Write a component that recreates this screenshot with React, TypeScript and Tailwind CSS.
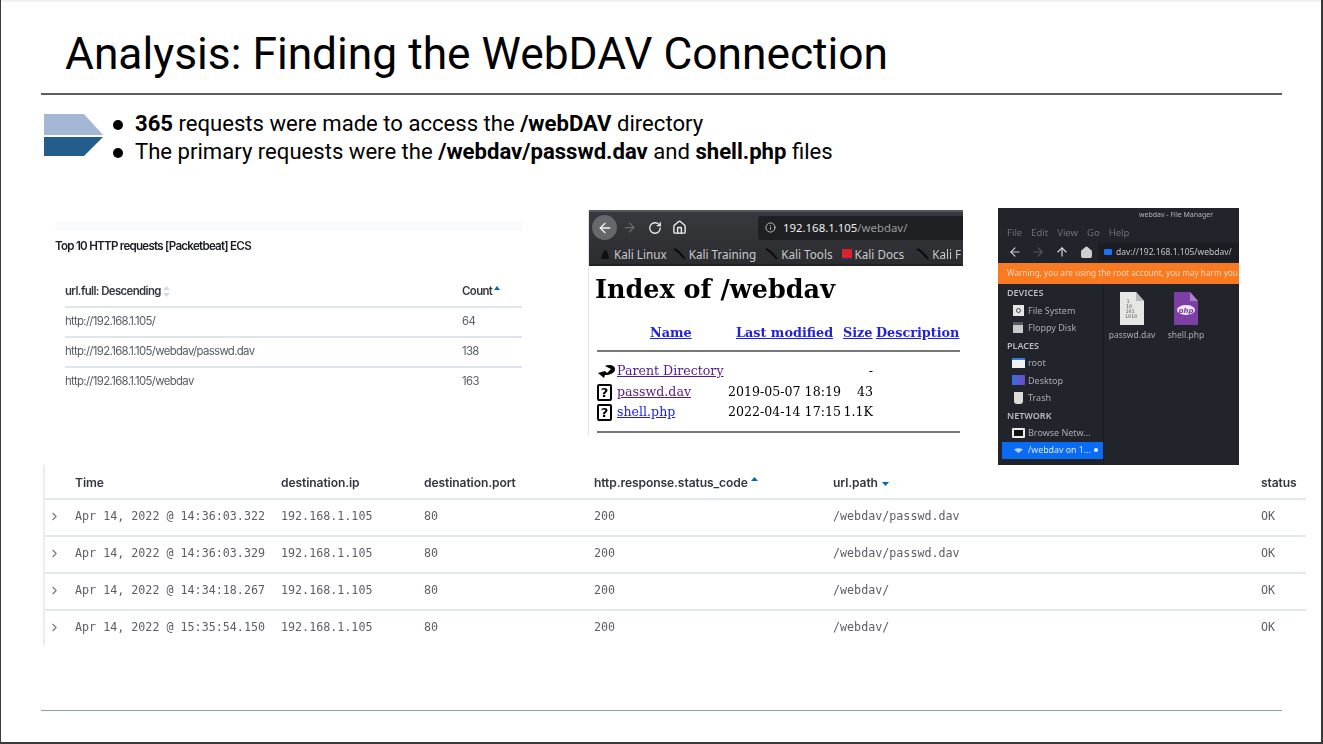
import React from 'react';
import { ArrowLeft, ArrowRight, RotateCw, Home, Info, ArrowUp, ChevronRight } from 'lucide-react';

const topUrls = [
  { url: 'http://192.168.1.105/', count: '64' },
  { url: 'http://192.168.1.105/webdav/passwd.dav', count: '138' },
  { url: 'http://192.168.1.105/webdav', count: '163' },
];

const rows = [
  { time: 'Apr 14, 2022 @ 14:36:03.322', path: '/webdav/passwd.dav' },
  { time: 'Apr 14, 2022 @ 14:36:03.329', path: '/webdav/passwd.dav' },
  { time: 'Apr 14, 2022 @ 14:34:18.267', path: '/webdav/' },
  { time: 'Apr 14, 2022 @ 15:35:54.150', path: '/webdav/' },
];

const gridCols = 'grid grid-cols-[30px_206px_143px_170px_239px_428px_45px] items-center';

function SlideArrow() {
  return (
    <svg width="60" height="44" viewBox="0 0 60 44" className="shrink-0">
      <polygon points="0,1 40,1 59,22 0,22" fill="#a4b8d6" />
      <polygon points="0,24 59,24 40,43 0,43" fill="#235d8e" />
    </svg>
  );
}

function Bookmark({ label, red, className }: { label: string; red?: boolean; className?: string }) {
  return (
    <span className={`flex items-center gap-[3px] ${className ?? ''}`}>
      {red ? (
        <span className="w-[10px] h-[11px] bg-[#d8232a] border-b-2 border-[#27306a]" />
      ) : (
        <svg width="13" height="12" viewBox="0 0 13 12">
          <path d="M1 1 C4 2 8 6 12 11" stroke="#0b0b0b" strokeWidth="2" fill="none" />
        </svg>
      )}
      <span>{label}</span>
    </span>
  );
}

function DocIcon() {
  return (
    <span className="w-[15px] h-[17px] border-2 border-black rounded-[2px] flex items-center justify-center font-['DejaVu_Sans'] font-bold text-[13px] text-black leading-none">
      ?
    </span>
  );
}

function Side({ label, icon }: { label: string; icon: React.ReactNode }) {
  return (
    <div className="h-[17.5px] pl-[13px] flex items-center gap-[3px]">
      <span className="w-[14px] h-[14px] flex items-center justify-center shrink-0">{icon}</span>
      <span>{label}</span>
    </div>
  );
}

function Heading({ label }: { label: string }) {
  return <div className="h-[17.5px] flex items-center pl-[9px] font-semibold text-[#b9bcc0]">{label}</div>;
}

export default function App() {
  return (
    <div className="w-[1323px] h-[744px] overflow-hidden bg-white border-l border-r-2 border-b-2 border-[#3a3a3a] flex flex-col font-['Roboto',sans-serif] text-black">
      <div className="h-[2px] bg-[#f1f1f1] shrink-0" />

      <h1 className="h-[91px] pl-[64px] pt-[22px] text-[44.3px] leading-[60px] font-normal shrink-0">
        Analysis: Finding the WebDAV Connection
      </h1>
      <div className="ml-[40px] w-[1241px] h-[1.5px] bg-[#5f5f5f] shrink-0" />

      {/* Bullets */}
      <div className="h-[113px] pl-[43px] pt-[18px] flex items-start gap-[9px] shrink-0">
        <SlideArrow />
        <ul className="text-[22.1px] leading-[28px] -mt-[4px]">
          <li className="flex items-center">
            <span className="w-[10px] h-[10px] mt-[4px] rounded-full bg-black mr-[12px]" />
            <span><b className="font-bold">365</b> requests were made to access the <b className="font-bold">/webDAV</b> directory</span>
          </li>
          <li className="flex items-center">
            <span className="w-[10px] h-[10px] mt-[4px] rounded-full bg-black mr-[12px]" />
            <span>The primary requests were the <b className="font-bold">/webdav/passwd.dav</b> and <b className="font-bold">shell.php</b> files</span>
          </li>
        </ul>
      </div>

      {/* Screenshots */}
      <div className="h-[257px] flex items-start shrink-0">
        {/* Kibana top requests */}
        <div className="ml-[54px] mt-[14px] w-[467px] font-['Inter',sans-serif] blur-[0.4px]">
          <div className="h-[9px] bg-[#fafbfc]" />
          <div className="h-[32px] flex items-center text-[11.6px] font-semibold text-[#1a1c21] tracking-[-0.75px]">
            Top 10 HTTP requests [Packetbeat] ECS
          </div>
          <div className="ml-[10px] h-[45px] pt-[15px] flex items-center justify-between border-b-2 border-[#dfe4ee] text-[11.4px] font-semibold text-[#343741] tracking-[-0.6px]">
            <span className="flex items-center gap-[2px]">
              url.full: Descending
              <svg width="7" height="11" viewBox="0 0 7 11"><path d="M3.5 0 7 4H0zM3.5 11 0 7h7z" fill="#d3dae6" /></svg>
            </span>
            <span className="w-[60px] flex items-start gap-[2px]">
              Count
              <svg width="6" height="4" viewBox="0 0 6 4" className="mt-[3px]"><path d="M3 0 6 4H0z" fill="#006bb4" /></svg>
            </span>
          </div>
          {topUrls.map((r) => (
            <div key={r.url} className="ml-[10px] h-[30px] flex items-center justify-between border-b-2 border-[#dfe4ee] last:border-b-transparent text-[11.4px] text-[#5a5c66] tracking-[-0.65px]">
              <span>{r.url}</span>
              <span className="w-[60px]">{r.count}</span>
            </div>
          ))}
        </div>

        {/* Firefox directory listing */}
        <div className="ml-[66px] mt-[2px] w-[375px] h-[225px] overflow-hidden border-l border-[#e4e4e4] blur-[0.3px]">
          <div className="h-[56px] bg-gradient-to-b from-[#38393e] to-[#2c2d31] border-t-2 border-[#55565a] border-b-2 border-b-[#222]">
            <div className="h-[32px] flex items-center">
              <span className="ml-[3px] w-[25px] h-[25px] rounded-full bg-[#67686c] flex items-center justify-center">
                <ArrowLeft size={16} color="#f2f2f2" strokeWidth={2} />
              </span>
              <ArrowRight size={15} color="#6a6b70" strokeWidth={2} className="ml-[5px]" />
              <RotateCw size={14} color="#f0f0f0" strokeWidth={2.2} className="ml-[11px]" />
              <Home size={15} color="#f0f0f0" strokeWidth={2.2} className="ml-[10px]" />
              <div className="ml-[71px] flex-1 h-[24px] rounded-l-[3px] bg-[#1f2023] flex items-center pl-[7px] gap-[7px] text-[11.4px] font-['Noto_Sans',sans-serif]">
                <Info size={11} color="#c8c8c8" />
                <span className="text-[#eeeeee]">192.168.1.105<span className="text-[#9a9a9e]">/webdav/</span></span>
              </div>
            </div>
            <div className="h-[20px] pt-[2px] flex items-center gap-[9px] pl-[11px] whitespace-nowrap text-[11.7px] text-[#c9cacc] font-['Noto_Sans',sans-serif]">
              <span className="flex items-center gap-[3px] -mr-[3px]">
                <svg width="11" height="11" viewBox="0 0 11 11"><path d="M1 10 Q3 1 6 1 Q8 3 9 10Z" fill="#111" /></svg>
                Kali Linux
              </span>
              <Bookmark label="Kali Training" />
              <Bookmark label="Kali Tools" />
              <Bookmark label="Kali Docs" red />
              <Bookmark label="Kali F" className="ml-[3px]" />
            </div>
          </div>

          <div className="font-['DejaVu_Serif',serif] text-black">
            <h2 className="h-[46px] pl-[6px] text-[25.5px] leading-[46px] font-bold whitespace-nowrap">Index of /webdav</h2>
            <div className="h-[33px] pt-[10px] flex items-center font-bold text-[12.8px] text-[#2222dd] underline whitespace-nowrap">
              <span className="ml-[61px] w-[86px]">Name</span>
              <span className="w-[107px]">Last modified</span>
              <span className="w-[33px]">Size</span>
              <span>Description</span>
            </div>
            <div className="mx-[8px] mt-[5px] w-[363px] h-[2px] bg-[#777]" />
            <div className="pt-[10px] text-[12.6px]">
              <div className="h-[20.5px] flex items-center ml-[8px]">
                <svg width="19" height="15" viewBox="0 0 19 15" className="shrink-0">
                  <path d="M1 9 L8 7 L10 9 L14 5 L8 2 C11 0 18 1 18 5 C18 9 13 11 8 11 L7 14 Z" fill="#000" />
                </svg>
                <a className="ml-[1px] w-[111px] text-[#551a8b] underline whitespace-nowrap">Parent Directory</a>
                <span className="w-[115px]" />
                <span className="w-[30px] text-right">-</span>
              </div>
              <div className="h-[20.5px] flex items-center ml-[8px]">
                <DocIcon />
                <a className="ml-[5px] w-[111px] text-[#551a8b] underline">passwd.dav</a>
                <span className="w-[115px] whitespace-nowrap">2019-05-07 18:19</span>
                <span className="w-[30px] text-right">43</span>
              </div>
              <div className="h-[20.5px] flex items-center ml-[8px]">
                <DocIcon />
                <a className="ml-[5px] w-[111px] text-[#1a1aee] underline">shell.php</a>
                <span className="w-[115px] whitespace-nowrap">2022-04-14 17:15</span>
                <span className="w-[30px] text-right">1.1K</span>
              </div>
            </div>
            <div className="mx-[8px] mt-[8px] w-[363px] h-[2px] bg-[#777]" />
          </div>
        </div>

        {/* Thunar file manager */}
        <div className="ml-[35px] w-[241px] h-[257px] overflow-hidden bg-[#22242b] flex flex-col font-['Noto_Sans',sans-serif] text-[9px] text-[#a9abb0] blur-[0.4px]">
          <div className="h-[15px] pt-[1px] pl-[141px] flex items-center text-[7px] text-[#b4b5b9] whitespace-nowrap">webdav - File Manager</div>
          <div className="h-[19px] pt-[2px] flex items-center gap-[9px] pl-[9px] text-[9.5px] text-[#6f7176]">
            <span>File</span><span>Edit</span><span>View</span><span>Go</span><span>Help</span>
          </div>
          <div className="h-[21px] flex items-center">
            <ArrowLeft size={14} color="#c9c9cc" className="ml-[10px]" />
            <ArrowRight size={14} color="#555860" className="ml-[9px]" />
            <ArrowUp size={14} color="#dcdcde" className="ml-[10px]" />
            <Home size={13} color="#cfcfd2" fill="#cfcfd2" className="ml-[11px]" />
            <div className="ml-[5px] flex-1 h-[18px] bg-[#1b1d22] flex items-center gap-[4px] pl-[6px] text-[8.5px] text-[#c4c5c9] whitespace-nowrap">
              <span className="w-[8px] h-[6px] rounded-[1px] bg-[#1a73f0]" />
              dav://192.168.1.105/webdav/
            </div>
          </div>
          <div className="h-[21.5px] shrink-0 bg-[#f97a20] flex items-center pl-[9px] text-[8.2px] text-[#f7d9bf] whitespace-nowrap">
            Warning, you are using the root account, you may harm you
          </div>
          <div className="flex flex-1">
            <div className="w-[106px] border-r border-[#191b20]">
              <Heading label="DEVICES" />
              <Side label="File System" icon={<span className="w-[11px] h-[11px] bg-[#e6e6e6] flex items-center justify-center"><span className="w-[5px] h-[5px] rounded-full border border-[#444]" /></span>} />
              <Side label="Floppy Disk" icon={<span className="w-[10px] h-[11px] bg-[#c9c9cb] border-t-[3px] border-[#55575c]" />} />
              <Heading label="PLACES" />
              <Side label="root" icon={<span className="w-[13px] h-[10px] bg-[#f1f1f1] border-t-2 border-[#2f7be0]" />} />
              <Side label="Desktop" icon={<span className="w-[13px] h-[10px] bg-gradient-to-r from-[#2f6fe0] to-[#6a48c8]" />} />
              <Side label="Trash" icon={<span className="w-[9px] h-[12px] bg-[#dcdcd8] rounded-b-[3px]" />} />
              <Heading label="NETWORK" />
              <Side label="Browse Netw..." icon={<span className="w-[13px] h-[10px] rounded-[1px] bg-[#111] border-2 border-[#ececec]" />} />
              <div className="ml-[4px] h-[17.5px] bg-[#0a6cf5] flex items-center pl-[12px] text-[#d8e6fb] text-[8.8px]">
                <svg width="9" height="5" viewBox="0 0 9 5" className="mr-[5px] shrink-0">
                  <path d="M0 1.500 Q4.500 -1 9 1.500 L4.500 5Z" fill="#b5d0fa" />
                </svg>
                <span className="flex-1 whitespace-nowrap">/webdav on 1...</span>
                <span className="w-[4px] h-[4px] rounded-full bg-[#e8f0fe] mr-[5px]" />
              </div>
            </div>
            <div className="flex-1 flex pl-[1px] pt-[8px] text-[8.5px] text-[#a9abb0]">
              <div className="w-[54px] flex flex-col items-center">
                <svg width="26" height="33" viewBox="0 0 26 33">
                  <path d="M1 0H17L25 9V33H1Z" fill="#e6e6e4" />
                  <path d="M17 0L25 9H17Z" fill="#b9b9b6" />
                  <g fill="#666" fontSize="5" fontFamily="DejaVu Sans Mono, monospace" textAnchor="middle">
                    <text x="9" y="11">1</text>
                    <text x="10" y="16">10</text>
                    <text x="11" y="21">101</text>
                    <text x="12" y="26">1010</text>
                  </g>
                </svg>
                <span className="mt-[4px] whitespace-nowrap">passwd.dav</span>
              </div>
              <div className="w-[54px] flex flex-col items-center">
                <svg width="26" height="33" viewBox="0 0 26 33">
                  <path d="M1 0H17L25 9V33H1Z" fill="#7b3fa6" />
                  <path d="M17 0L25 9H17Z" fill="#a983c6" />
                  <ellipse cx="13" cy="18" rx="9" ry="5" fill="#f0e8f6" />
                  <text x="13" y="20.500" textAnchor="middle" fontSize="7" fontWeight="700" fontStyle="italic" fontFamily="DejaVu Sans, sans-serif" fill="#7b3fa6">php</text>
                </svg>
                <span className="mt-[4px] whitespace-nowrap">shell.php</span>
              </div>
            </div>
          </div>
        </div>
      </div>

      {/* Kibana discover table */}
      <div className="ml-[42px] h-[180px] w-[1263px] border-l-2 border-[#e9ecf3] shrink-0 blur-[0.3px]">
        <div className={`${gridCols} h-[35px] pt-[4px] border-b-2 border-[#e3e7f0] font-['Inter',sans-serif] text-[12.1px] font-semibold text-[#343741] tracking-[-0.1px]`}>
          <span />
          <span>Time</span>
          <span>destination.ip</span>
          <span>destination.port</span>
          <span className="flex items-start gap-[3px]">
            http.response.status_code
            <svg width="7" height="4" viewBox="0 0 7 4" className="mt-[3px]"><path d="M3.500 0 7 4H0z" fill="#006bb4" /></svg>
          </span>
          <span className="flex items-center gap-[4px]">
            url.path
            <svg width="7" height="4" viewBox="0 0 7 4" className="mt-[3px]"><path d="M0 0H7L3.500 4z" fill="#006bb4" /></svg>
          </span>
          <span>status</span>
        </div>
        {rows.map((r, i) => (
          <div key={i} className={`${gridCols} h-[37px] border-b-2 border-[#e3e7f0] last:border-b-transparent font-['DejaVu_Sans_Mono',monospace] text-[11.7px] text-[#5c5e68] whitespace-nowrap`}>
            <ChevronRight size={13} color="#777" className="ml-[3px] -mt-[1px]" />
            <span>{r.time}</span>
            <span>192.168.1.105</span>
            <span>80</span>
            <span>200</span>
            <span>{r.path}</span>
            <span>OK</span>
          </div>
        ))}
      </div>

      <div className="flex-1" />
      <div className="ml-[40px] w-[1241px] h-[1.5px] bg-[#8f9ea8] mb-[31px] shrink-0" />
    </div>
  );
}
